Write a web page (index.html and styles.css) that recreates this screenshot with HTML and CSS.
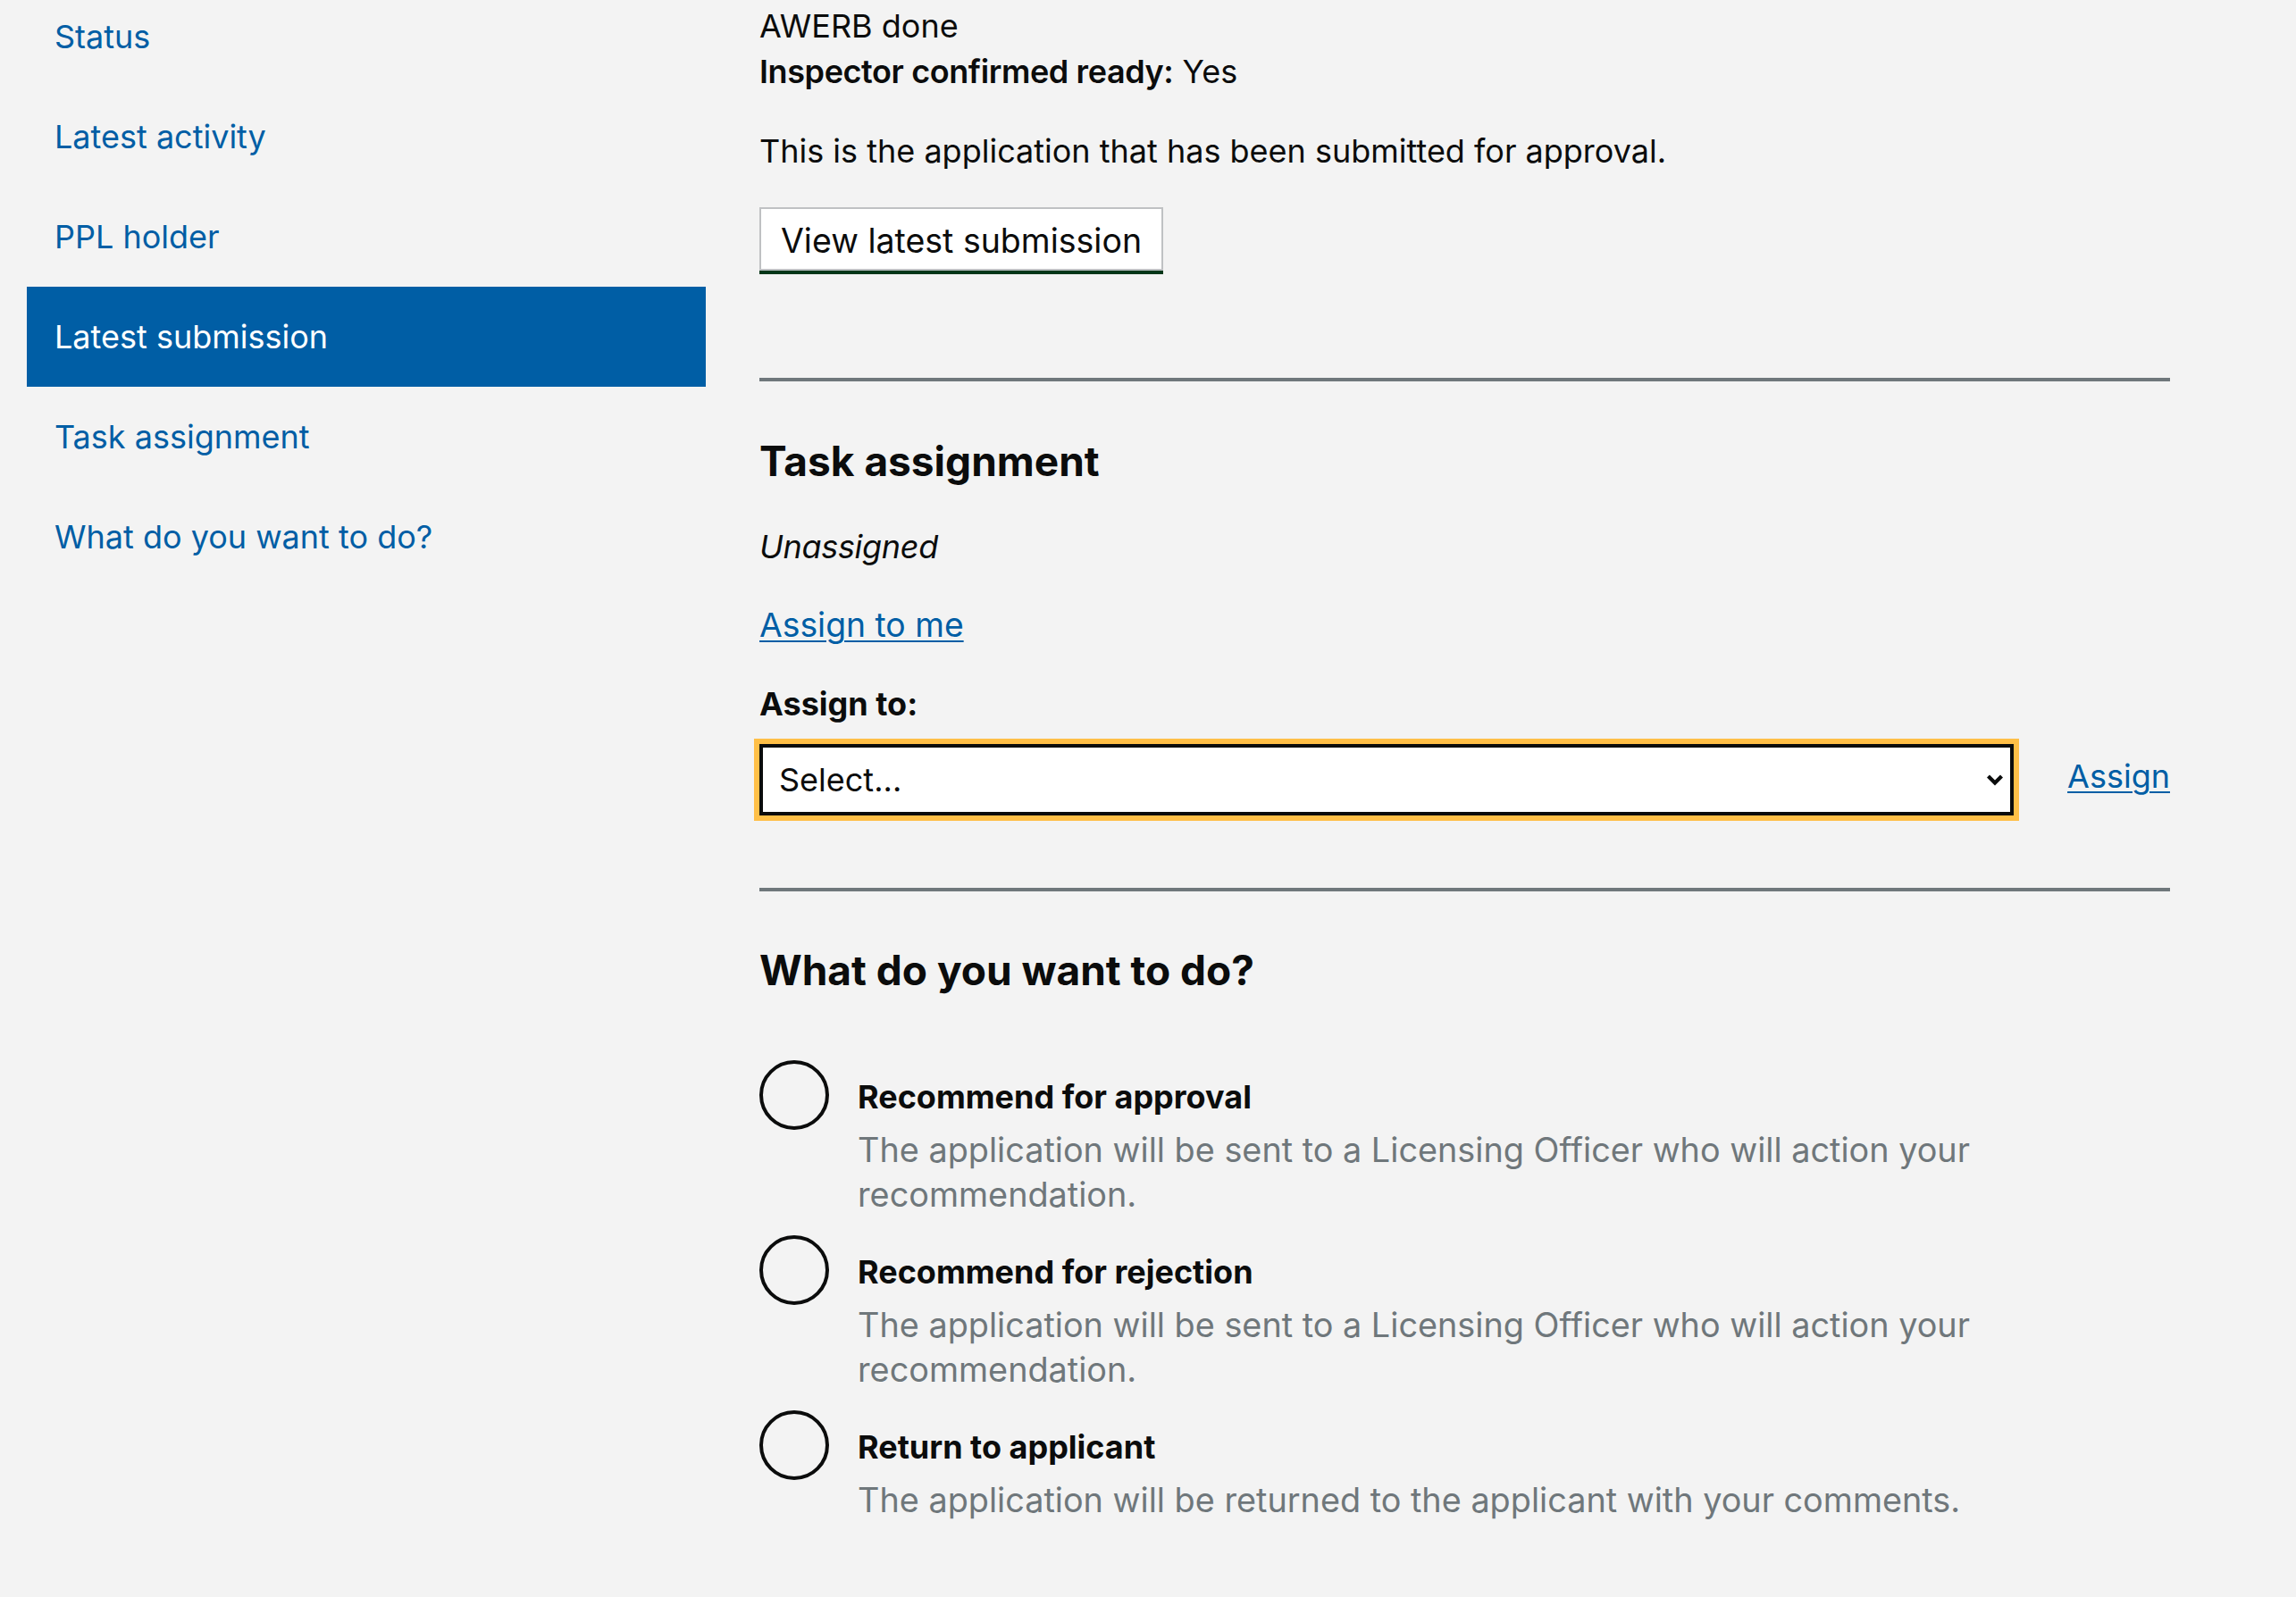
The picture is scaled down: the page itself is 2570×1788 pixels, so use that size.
FILE: index.html
```html
<!DOCTYPE html>
<html lang="en">
<head>
<meta charset="utf-8">
<title>Application</title>
<link rel="stylesheet" href="styles.css">
</head>
<body>
<div class="layout">
  <nav class="side-nav">
    <ul class="side-nav__list">
      <li><a class="side-nav__link" href="#status">Status</a></li>
      <li><a class="side-nav__link" href="#activity">Latest activity</a></li>
      <li><a class="side-nav__link" href="#holder">PPL holder</a></li>
      <li><a class="side-nav__link side-nav__link--active" href="#submission">Latest submission</a></li>
      <li><a class="side-nav__link" href="#task">Task assignment</a></li>
      <li><a class="side-nav__link" href="#action">What do you want to do?</a></li>
    </ul>
  </nav>

  <main class="content">
    <section class="submission" id="submission">
      <div class="meta">
        <div class="meta__line">AWERB done</div>
        <div class="meta__line"><strong class="meta__key">Inspector confirmed ready:</strong> Yes</div>
      </div>
      <p class="body-text">This is the application that has been submitted for approval.</p>
      <button class="button-secondary" type="button">View latest submission</button>
    </section>

    <section class="section" id="task">
      <h2 class="heading">Task assignment</h2>
      <p class="body-text body-text--italic">Unassigned</p>
      <p class="body-text"><a class="link link--wide" href="#">Assign to me</a></p>
      <label class="label" for="assignee">Assign to:</label>
      <div class="assign-row">
        <div class="select-wrap">
          <select class="select" id="assignee">
            <option>Select...</option>
          </select>
          <svg class="select-wrap__arrow" width="20" height="14" viewBox="0 0 20 14" aria-hidden="true">
            <path d="M2.5 3 L10 10.5 L17.5 3" fill="none" stroke="#0b0c0c" stroke-width="4.2"/>
          </svg>
        </div>
        <a class="link assign-row__link" href="#">Assign</a>
      </div>
    </section>

    <section class="section" id="action">
      <h2 class="heading">What do you want to do?</h2>
      <div class="radios">
        <div class="radios__item">
          <input class="radios__input" type="radio" name="decision" id="d1">
          <div class="radios__body">
            <label class="radios__label" for="d1">Recommend for approval</label>
            <div class="radios__hint">The application will be sent to a Licensing Officer who will action your recommendation.</div>
          </div>
        </div>
        <div class="radios__item">
          <input class="radios__input" type="radio" name="decision" id="d2">
          <div class="radios__body">
            <label class="radios__label" for="d2">Recommend for rejection</label>
            <div class="radios__hint">The application will be sent to a Licensing Officer who will action your recommendation.</div>
          </div>
        </div>
        <div class="radios__item">
          <input class="radios__input" type="radio" name="decision" id="d3">
          <div class="radios__body">
            <label class="radios__label" for="d3">Return to applicant</label>
            <div class="radios__hint">The application will be returned to the applicant with your comments.</div>
          </div>
        </div>
      </div>
    </section>
  </main>
</div>
</body>
</html>
```

FILE: styles.css
```css
* { box-sizing: border-box; }

html, body {
  margin: 0;
  padding: 0;
  background: #f3f3f3;
}

body {
  font-family: Inter, "Noto Sans", "Liberation Sans", sans-serif;
  font-size: 36px;
  line-height: 50px;
  color: #0b0c0c;
  overflow: hidden;
}

.layout {
  display: grid;
  grid-template-columns: 760px 1579px;
  column-gap: 60px;
  padding-left: 30px;
  align-items: start;
}

/* side navigation */
.side-nav {
  margin-top: -15px;
}
.side-nav__list {
  list-style: none;
  margin: 0;
  padding: 0;
}
.side-nav__link {
  display: block;
  padding: 31px 29px 31px 31px;
  color: #005ea5;
  text-decoration: none;
}
.side-nav__link--active {
  background: #005ea5;
  color: #ffffff;
}

/* main content */
.content {
  padding-top: 4px;
  padding-bottom: 120px;
}

.meta__line {
  line-height: 50px;
}
.meta__line + .meta__line {
  margin-top: 1px;
}
.meta__key {
  font-weight: 600;
  letter-spacing: -0.4px;
}

.body-text {
  margin: 0;
}
.submission .body-text {
  margin-top: 39px;
}
.body-text--italic {
  font-style: italic;
  letter-spacing: -0.3px;
}

.button-secondary {
  display: inline-block;
  margin-top: 38px;
  padding: 11px 22px 6px;
  font-family: inherit;
  font-size: 37.5px;
  line-height: 50px;
  color: #0b0c0c;
  background: #ffffff;
  border: 2px solid #bfc1c3;
  border-radius: 0;
  box-shadow: 0 4px 0 #003618;
  cursor: pointer;
}

.section {
  margin-top: 120px;
  border-top: 4px solid #6f777b;
  padding-top: 62px;
}
.section + .section {
  margin-top: 81px;
  padding-top: 61px;
}

.heading {
  margin: 0;
  font-size: 46px;
  line-height: 55px;
  font-weight: 700;
}

#task .body-text--italic {
  margin-top: 43px;
}
#task .body-text + .body-text {
  margin-top: 38px;
}

.link {
  color: #005ea5;
  text-decoration: underline;
  text-decoration-thickness: 2px;
  text-underline-offset: 4px;
}
.link--wide {
  font-size: 37.3px;
}

.label {
  display: block;
  margin-top: 38px;
  font-weight: 700;
}

.assign-row {
  display: flex;
  align-items: center;
  gap: 60px;
  margin-top: 20px;
}
.select-wrap {
  position: relative;
  flex: 1;
}
.select {
  display: block;
  width: 100%;
  height: 80px;
  margin: 0;
  padding: 11px 60px 11px 18px;
  font: inherit;
  line-height: 50px;
  color: #0b0c0c;
  background: #ffffff;
  border: 4px solid #0b0c0c;
  border-radius: 0;
  outline: 6px solid #ffbf47;
  outline-offset: 0;
  -webkit-appearance: none;
  appearance: none;
}
.select-wrap__arrow {
  position: absolute;
  right: 11px;
  top: 33px;
  pointer-events: none;
}
.assign-row__link {
  margin-bottom: 8px;
}

.radios {
  margin-top: 73px;
}
.radios__item {
  display: flex;
  align-items: flex-start;
  margin-bottom: 21px;
}
.radios__input {
  -webkit-appearance: none;
  appearance: none;
  flex: none;
  width: 78px;
  height: 78px;
  margin: 0;
  border: 4px solid #0b0c0c;
  border-radius: 50%;
  background: transparent;
}
.radios__body {
  padding-left: 32px;
  padding-right: 20px;
}
.radios__label {
  display: block;
  padding-top: 16px;
  padding-bottom: 9px;
  font-weight: 700;
}
.radios__hint {
  color: #6f777b;
  font-size: 37.8px;
}
```
